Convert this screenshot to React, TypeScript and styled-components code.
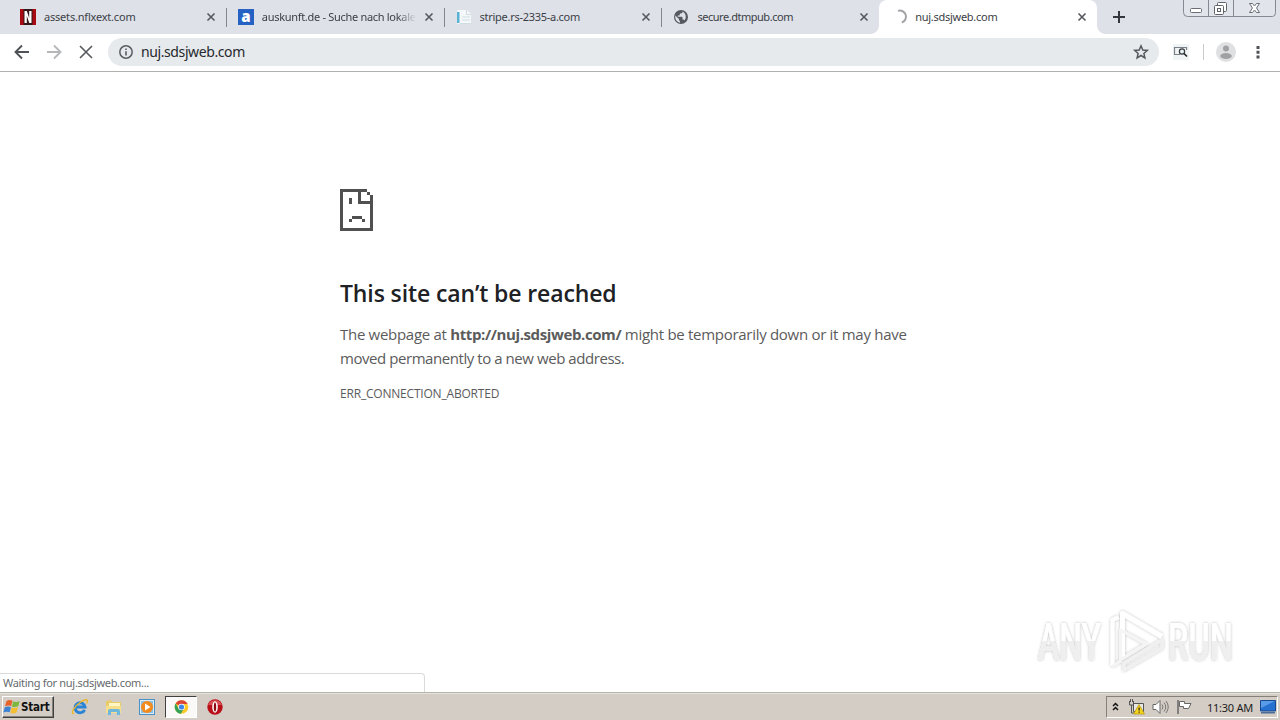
import React from "react";
import styled, { createGlobalStyle } from "styled-components";

interface TabProp {
  title: string;
  icon: React.ReactNode;
  spacing?: number;
  active?: boolean;
  divider?: boolean;
}

const CloseIcon = () => (
  <svg width="8" height="8" viewBox="0 0 8 8">
    <path d="M0.5 0.5L7.5 7.5M7.5 0.5L0.5 7.5" stroke="#55585d" strokeWidth="1.6" />
  </svg>
);

const NetflixIcon = () => (
  <svg width="16" height="16" viewBox="0 0 16 16">
    <path d="M0 0h16v16H0z" fill="#a90b12" />
    <path d="M3.5 0h9v16h-9z" fill="#35181a" />
    <path d="M4.5 2h2.3l2.4 7V2h2.3v12H9.3L6.8 7v7H4.5z" fill="#fff" />
  </svg>
);

const AuskunftIcon = () => (
  <svg width="16" height="16" viewBox="0 0 16 16">
    <path d="M0 0h16v16H0z" fill="#2562c4" />
    <text x="8" y="12.5" textAnchor="middle" fontFamily="Open Sans, sans-serif" fontWeight="800" fontSize="15" fill="#fff">
      a
    </text>
  </svg>
);

const PageIcon = () => (
  <svg width="16" height="16" viewBox="0 0 16 16">
    <path d="M1 1h10l4 4v10H1z" fill="#f4f8fa" />
    <path d="M1 3h2.500v11H1z" fill="#58b3d2" />
    <path d="M10.5 1v4.5H15M6 8h8M6 11h8M4 14.500h11" stroke="#d0dde3" fill="none" />
  </svg>
);

const GlobeIcon = () => (
  <svg width="16" height="16" viewBox="0 0 16 16">
    <circle cx="8" cy="8" r="7" fill="#555960" />
    <path
      d="M2.2 6.6L6 10v1.2l1 1v1.6C4.2 13.3 2.2 10.9 2.2 8zM9.5 2.5v.6c0 .8-.6 1.4-1.4 1.4H6.8v1.3c0 .4-.3.7-.7.7H4.8v1.3h4c.4 0 .7.3.7.7v2h.7c.6 0 1.1.4 1.3.9A5.8 5.8 0 0 0 9.500 2.500z"
      fill="#dee1e8"
    />
  </svg>
);

const SpinnerIcon = () => (
  <svg width="16" height="16" viewBox="0 0 16 16">
    <path d="M7 1.900A6 6 0 1 1 10.800 13.500" fill="none" stroke="#a2a3a6" strokeWidth="2" />
  </svg>
);

const Tab: React.FC<TabProp> = ({ title, icon, spacing, active, divider }) => {
  return (
    <TabBox $active={active} $divider={divider}>
      <TabIcon>{icon}</TabIcon>
      <TabTitle $spacing={spacing} $fade={title.length > 22}>
        {title}
      </TabTitle>
      <CloseIcon />
    </TabBox>
  );
};

const WindowButtons = () => (
  <Buttons>
    <svg width="94" height="18" viewBox="0 0 94 18">
      <path d="M.5 0v12.500q0 4 4 4h85q3 0 3-4V0M25.500 0v16M50.500 0v16" fill="#e1e4ea" stroke="#858994" />
      <rect x="7.500" y="8.500" width="11" height="4" rx="1" fill="#fff" stroke="#6a6d76" />
      <rect x="34.500" y="2.500" width="9" height="9" rx="1" fill="#fff" stroke="#60636c" />
      <rect x="31.500" y="5.500" width="9" height="9" rx="1" fill="#fff" stroke="#60636c" />
      <rect x="34.500" y="8.500" width="3" height="3" fill="#fff" stroke="#60636c" />
      <path d="M66.500 3.500h3l2 2.500 2-2.500h3L73.500 8l3 4.500h-3l-2-2.500-2 2.500h-3l3-4.500z" fill="#fff" stroke="#6a6d76" />
    </svg>
  </Buttons>
);

const Watermark = () => (
  <WatermarkBox>
    <svg width="212" height="76" viewBox="0 0 212 76">
      <defs>
        <filter id="soft" x="-10%" y="-20%" width="120%" height="140%">
          <feDropShadow dx="0" dy="0" stdDeviation="1.8" floodColor="#000" floodOpacity="0.28" />
        </filter>
        <linearGradient id="shade" gradientUnits="userSpaceOnUse" x1="0" y1="16" x2="0" y2="54">
          <stop offset="0.5" stopColor="#fff" />
          <stop offset="0.51" stopColor="#efefef" />
        </linearGradient>
      </defs>
      <g filter="url(#soft)">
        <g fill="url(#shade)" fontFamily="Roboto, sans-serif" fontSize="52" fontWeight="500">
          <text x="8" y="54" textLength="63" lengthAdjust="spacingAndGlyphs">
            ANY
          </text>
          <text x="138" y="54" textLength="65" lengthAdjust="spacingAndGlyphs">
            RUN
          </text>
        </g>
        <g fill="none" stroke="#fff" strokeWidth="4" strokeLinejoin="round">
          <path d="M92.500 52V7.500L132 30.500" strokeWidth="5" />
          <path d="M82.500 60V14l6-3" />
          <path d="M82.500 60l8-5V24L116 38L90 54" stroke="#f5f5f5" strokeWidth="3" />
          <path d="M94 64l38-22v-8L94 57z" stroke="#f0f0f0" strokeWidth="3" />
        </g>
      </g>
    </svg>
  </WatermarkBox>
);

const App: React.FC = () => {
  return (
    <>
      <GlobalStyle />
      <Screen>
        <TabStrip>
          <Tab title="assets.nflxext.com" icon={<NetflixIcon />} spacing={-0.2} divider />
          <Tab title="auskunft.de - Suche nach lokalen" icon={<AuskunftIcon />} spacing={-0.3} divider />
          <Tab title="stripe.rs-2335-a.com" icon={<PageIcon />} spacing={-0.28} divider />
          <Tab title="secure.dtmpub.com" icon={<GlobeIcon />} spacing={-0.47} />
          <Tab title="nuj.sdsjweb.com" icon={<SpinnerIcon />} spacing={-0.27} active />
          <NewTab>
            <svg width="12" height="12" viewBox="0 0 12 12">
              <path d="M6 0v12M0 6h12" stroke="#33363b" strokeWidth="2" />
            </svg>
          </NewTab>
          <WindowButtons />
        </TabStrip>
        <Toolbar>
          <NavIcons>
            <svg width="16" height="16" viewBox="0 0 16 16">
              <path d="M15 8H2M8 1.5L1.5 8L8 14.5" fill="none" stroke="#4f5256" strokeWidth="1.9" />
            </svg>
            <svg width="16" height="16" viewBox="0 0 16 16">
              <path d="M1 8h13M8 1.5L14.5 8L8 14.5" fill="none" stroke="#b6b7b9" strokeWidth="1.9" />
            </svg>
            <svg width="16" height="16" viewBox="0 0 16 16">
              <path d="M2 2l12 12M14 2L2 14" stroke="#55585c" strokeWidth="1.6" />
            </svg>
          </NavIcons>
          <AddressBar>
            <svg width="14" height="14" viewBox="0 0 14 14">
              <circle cx="7" cy="7" r="6.2" fill="none" stroke="#5a5d61" strokeWidth="1.5" />
              <path d="M6.2 3.500h1.600v1.500H6.200zM6.200 6.200h1.600v4.400H6.200z" fill="#5a5d61" />
            </svg>
            <Url>nuj.sdsjweb.com</Url>
            <svg width="16" height="16" viewBox="0 0 16 16">
              <path
                d="M8 1.8l1.8 4.200 4.500.4-3.400 3 1 4.500L8 11.500l-3.900 2.400 1-4.500-3.400-3 4.500-.4z"
                fill="none"
                stroke="#55585c"
                strokeWidth="1.5"
              />
            </svg>
          </AddressBar>
          <Extension>
            <svg width="16" height="16" viewBox="0 0 16 16">
              <path d="M0 0h16v16H0z" fill="#f1f4f5" />
              <path d="M7 10.500H1.500V3.500h12V6" fill="none" stroke="#7b8087" strokeWidth="1.2" />
              <circle cx="9" cy="7.500" r="2.600" fill="#e8f2f4" stroke="#35393e" strokeWidth="1.2" />
              <path d="M11 9.500l3 3" stroke="#222" strokeWidth="1.600" />
            </svg>
          </Extension>
          <Divider />
          <Avatar>
            <svg width="20" height="20" viewBox="0 0 20 20">
              <circle cx="10" cy="10" r="10" fill="#dfe0e1" />
              <circle cx="10" cy="6.500" r="3" fill="#a0a1a3" />
              <ellipse cx="10" cy="14" rx="5.800" ry="3" fill="#a0a1a3" />
            </svg>
          </Avatar>
          <svg width="4" height="14" viewBox="0 0 4 14">
            <path d="M.5 1h3v3h-3zM.5 5.700h3v3h-3zM.5 10.500h3v3h-3z" fill="#4f5256" />
          </svg>
        </Toolbar>

        <Page>
          <Message>
            <svg width="33" height="42" viewBox="0 0 33 42" shapeRendering="crispEdges">
              <path
                d="M0 0h27v3H3v36h27V15H18V3h3v9h9V6h3v36H0zM27 3h3v3h-3zM9 9h3v6H9zM12 27h10v3H12zM9 30h3v3H9zM22 30h3v3h-3z"
                fill="#505050"
              />
            </svg>
            <h1>This site can’t be reached</h1>
            <p>
              <LineOne>
                The webpage at <Site>http://nuj.sdsjweb.com/</Site> might be temporarily down or it may have
              </LineOne>
              <LineTwo>moved permanently to a new web address.</LineTwo>
            </p>
            <ErrorCode>ERR_CONNECTION_ABORTED</ErrorCode>
          </Message>
          <Watermark />
          <Status>Waiting for nuj.sdsjweb.com...</Status>
        </Page>

        <Taskbar>
          <StartButton>
            <svg width="17" height="16" viewBox="0 0 17 16">
              <path d="M3.500 2q3-2 6-.3L8.200 7.100Q5.500 5.800 2 7.300z" fill="#e8622b" />
              <path d="M10.200 2.200Q13 3.800 16.700 2L15.200 7.200Q12 8.700 8.900 7.400z" fill="#7cb83e" />
              <path d="M1.800 8.200Q5 6.700 8 8L6.700 13.300Q4 11.900.3 13.500z" fill="#3d83d2" />
              <path d="M8.700 8.300Q12 9.700 15 8.100L13.600 13.500Q10.500 15.200 7.400 13.700z" fill="#f5bd30" />
            </svg>
            <span>Start</span>
          </StartButton>
          <Launchers>
            <Launcher>
              <svg width="18" height="18" viewBox="0 0 18 18">
                <path d="M13.600 11.800A5 5 0 1 1 14 9H5" fill="none" stroke="#2b83d4" strokeWidth="3" />
                <path d="M3 15.500C-1 16 3 8.500 9 4.500S18 1 15.500 5.500" fill="none" stroke="#e9b62c" strokeWidth="1.400" />
              </svg>
            </Launcher>
            <Launcher>
              <svg width="18" height="18" viewBox="0 0 18 18">
                <path d="M1 3l5-1 1 2h9v11H1z" fill="#e9cc69" />
                <path d="M4 5h11v4H4z" fill="#fff6c4" />
                <path d="M1 8h15v7H1z" fill="#f5df8b" />
                <path d="M3 17v-4q0-2 2-2h8q2 0 2 2v4h-3v-3H6v3z" fill="#6db6dc" />
              </svg>
            </Launcher>
            <Launcher>
              <svg width="18" height="18" viewBox="0 0 18 18">
                <rect x="1.500" y="1.500" width="15" height="15" fill="#d9ecf8" stroke="#4b91c6" />
                <path d="M3 3h12v12H3z" fill="#8dc2e7" />
                <circle cx="9" cy="9" r="6" fill="#f28a1d" />
                <path d="M7 5.500v7L12.500 9z" fill="#fff" />
              </svg>
            </Launcher>
            <Launcher $pressed>
              <svg width="16" height="16" viewBox="0 0 16 16">
                <circle cx="8.500" cy="8" r="6.800" fill="#fbc928" />
                <path d="M2.600 4.600A6.800 6.800 0 0 0 7.800 14.800L11 9.500 5.500 9.500z" fill="#35a153" />
                <path d="M8.500 8L2.600 4.600A6.800 6.800 0 0 1 14.600 5H8.500z" fill="#dc4436" />
                <circle cx="8.500" cy="8" r="3.300" fill="#fff" />
                <circle cx="8.500" cy="8" r="2.600" fill="#4285e8" />
              </svg>
            </Launcher>
            <Launcher $last>
              <svg width="18" height="18" viewBox="0 0 18 18">
                <circle cx="9" cy="9" r="7.700" fill="#b80f19" />
                <path d="M2 7a7.500 7.500 0 0 1 14 0z" fill="#d75055" />
                <ellipse cx="9" cy="9" rx="2.800" ry="5.800" fill="#fff" />
                <ellipse cx="9" cy="9" rx="1.200" ry="4.500" fill="#8f0b13" />
              </svg>
            </Launcher>
          </Launchers>
          <Tray>
            <Chevrons>
              <svg width="8" height="11" viewBox="0 0 8 11">
                <path d="M1 4l2.500-2.500L6 4M1 8l2.500-2.500L6 8" fill="none" stroke="#111" strokeWidth="1.500" />
              </svg>
            </Chevrons>
            <svg width="17" height="16" viewBox="0 0 17 16">
              <path d="M5.500 4.500h10v8h-10z" fill="#e9e7e3" stroke="#555" />
              <path d="M1.500 2v4h4V2M2.500 0v3M4.500 0v3M3.500 6v8h5" fill="none" stroke="#555" />
              <path d="M11 5.500L16.500 15h-11z" fill="#f6d51d" stroke="#b3930c" strokeWidth=".7" />
              <path d="M10.500 8.500h1.200v3h-1.200zM10.500 12.500h1.200v1.200h-1.200z" fill="#222" />
            </svg>
            <svg width="17" height="16" viewBox="0 0 17 16">
              <path d="M1 5.500h3l4-4v13l-4-4H1z" fill="#fff" stroke="#666" />
              <path d="M10 5.500q2 2.500 0 5M12 3.500q3.500 4.500 0 9M14 2q4.500 6 0 12" fill="none" stroke="#777" />
            </svg>
            <svg width="17" height="16" viewBox="0 0 17 16">
              <path d="M2 1v14" stroke="#666" strokeWidth="1.500" />
              <path d="M3.500 2.500h5v2h6.500l-2.500 5H7.500v-2h-4z" fill="#fff" stroke="#666" />
            </svg>
            <Clock>11:30 AM</Clock>
            <svg width="16" height="14" viewBox="0 0 16 14">
              <path d="M.5.5h15v10.500H.5z" fill="#2670cf" stroke="#174b91" />
              <path d="M1 1h14L1 8z" fill="#5a9be8" />
              <path d="M1 12h14v1.500H1z" fill="#4d6d96" />
            </svg>
          </Tray>
        </Taskbar>
      </Screen>
    </>
  );
};

export default App;

const GlobalStyle = createGlobalStyle`
  body {
    margin: 0;
    background-color: #fff;
    overflow: hidden;
  }

  svg {
    display: block;
    flex: none;
    overflow: visible;
  }
`;

const Screen = styled.div`
  width: 1280px;
  height: 720px;
  display: flex;
  flex-direction: column;
  font-family: "Noto Sans", sans-serif;
  overflow: hidden;
`;

const TabStrip = styled.div`
  height: 34px;
  display: flex;
  padding-left: 8px;
  background-color: #dee1e8;
`;

const TabBox = styled.div<{ $active?: boolean; $divider?: boolean }>`
  position: relative;
  width: 217.8px;
  height: 34px;
  box-sizing: border-box;
  padding: 0 11px 0 12px;
  display: flex;
  align-items: center;
  flex: none;
  background-color: ${({ $active }) => ($active ? "#fff" : "transparent")};
  border-radius: 8px 8px 0 0;

  &::before,
  &::after {
    content: "";
    display: ${({ $active }) => ($active ? "block" : "none")};
    position: absolute;
    bottom: 0;
    width: 8px;
    height: 8px;
  }
  &::before {
    left: -8px;
    background: radial-gradient(circle at 0 0, transparent 7.5px, #fff 8px);
  }
  &::after {
    right: -8px;
    background: radial-gradient(circle at 100% 0, transparent 7.5px, #fff 8px);
  }

  ${({ $divider }) =>
    $divider &&
    `
    &::after {
      display: block;
      right: -1px;
      bottom: 7px;
      width: 1px;
      height: 19px;
      background: #82868e;
    }
  `}
`;

const TabIcon = styled.div`
  width: 16px;
  margin-right: 8px;
`;

const TabTitle = styled.div<{ $spacing?: number; $fade?: boolean }>`
  width: 154px;
  margin-right: 9px;
  overflow: hidden;
  white-space: nowrap;
  font-size: 11px;
  line-height: 16px;
  letter-spacing: ${({ $spacing }) => $spacing || 0}px;
  color: #3c4046;
  mask-image: ${({ $fade }) => ($fade ? "linear-gradient(90deg, #000 88%, transparent)" : "none")};
`;

const NewTab = styled.div`
  display: flex;
  align-items: center;
  margin-left: 16px;
`;

const Buttons = styled.div`
  margin-left: auto;
  margin-right: 3px;
`;

const Toolbar = styled.div`
  height: 37px;
  box-sizing: content-box;
  display: flex;
  align-items: center;
  border-bottom: 1px solid #b1b2b0;
  background-color: #fff;

  > * {
    margin-bottom: 1px;
  }
`;

const NavIcons = styled.div`
  display: flex;
  gap: 16px;
  padding: 0 14px;
`;

const AddressBar = styled.div`
  width: 1051px;
  height: 28px;
  box-sizing: border-box;
  padding: 0 10px 0 11px;
  display: flex;
  align-items: center;
  border-radius: 14px;
  background-color: #e7eaed;
`;

const Url = styled.div`
  flex: 1;
  margin-left: 8px;
  font-size: 14px;
  line-height: 20px;
  letter-spacing: -0.4px;
  color: #25282c;
`;

const Extension = styled.div`
  margin-left: 14px;
`;

const Divider = styled.div`
  width: 1px;
  height: 16px;
  margin-left: 14px;
  margin-right: 12px;
  background-color: #c9cbce;
`;

const Avatar = styled.div`
  margin-right: 30px;
  width: 10px;
`;

const Page = styled.div`
  position: relative;
  height: 620px;
  background-color: #fff;
`;

const Message = styled.div`
  width: 600px;
  margin: 0 auto;
  padding-top: 117px;
  color: #5b5b5b;

  h1 {
    margin: 47px 0 0;
    font-family: "Open Sans", sans-serif;
    font-size: 23px;
    font-weight: 600;
    line-height: 30px;
    letter-spacing: -0.12px;
    color: #202124;
    white-space: nowrap;
  }
  p {
    margin: 14px 0 0;
    font-family: "Open Sans", sans-serif;
    font-size: 15px;
    line-height: 24px;
  }
`;

const LineOne = styled.span`
  display: block;
  white-space: nowrap;
  letter-spacing: -0.29px;
`;

const LineTwo = styled.span`
  display: block;
  white-space: nowrap;
  letter-spacing: -0.44px;
`;

const Site = styled.strong`
  font-weight: 700;
  letter-spacing: -0.39px;
`;

const ErrorCode = styled.div`
  margin-top: 16px;
  font-family: "Open Sans", sans-serif;
  font-size: 12px;
  line-height: 16px;
  letter-spacing: -0.2px;
`;

const WatermarkBox = styled.div`
  position: absolute;
  left: 1030px;
  top: 534px;
`;

const Status = styled.div`
  position: absolute;
  left: 0;
  bottom: 0;
  width: 425px;
  height: 19px;
  box-sizing: border-box;
  padding-left: 3px;
  border: 1px solid #d9dadc;
  border-width: 1px 1px 0 0;
  border-radius: 0 4px 0 0;
  background-color: #fff;
  font-size: 11px;
  line-height: 18px;
  letter-spacing: -0.31px;
  color: #666a6e;
`;

const Taskbar = styled.div`
  height: 28px;
  box-sizing: border-box;
  display: flex;
  align-items: center;
  padding: 2px 2px 1px 2px;
  border-top: 1px solid #b5b3ab;
  box-shadow: inset 0 1px #e6e2dc;
  background-color: #d4cdc5;
`;

const StartButton = styled.div`
  width: 52px;
  height: 22px;
  box-sizing: border-box;
  display: flex;
  align-items: center;
  gap: 1px;
  border: 1px solid;
  border-color: #fff #404040 #404040 #fff;
  box-shadow: inset -1px -1px #858078;
  font-family: "DejaVu Sans Condensed", "DejaVu Sans", sans-serif;
  font-size: 11.5px;
  font-weight: 700;
  letter-spacing: -0.2px;
  color: #111;
`;

const Launchers = styled.div`
  display: flex;
  gap: 1px;
  margin-left: 10px;
`;

const Launcher = styled.div<{ $pressed?: boolean; $last?: boolean }>`
  width: ${({ $pressed }) => ($pressed ? 32 : 32.5)}px;
  height: 22px;
  box-sizing: border-box;
  margin-left: ${({ $last }) => ($last ? 1 : 0)}px;
  display: flex;
  align-items: center;
  justify-content: center;
  border: 1px solid;
  border-color: ${({ $pressed }) => ($pressed ? "#404040 #fff #fff #404040" : "transparent")};
  background-color: ${({ $pressed }) => ($pressed ? "#faf9f8" : "transparent")};
`;

const Tray = styled.div`
  height: 22px;
  width: 172px;
  box-sizing: border-box;
  margin-left: auto;
  display: flex;
  align-items: center;
  padding: 0 1px 0 5px;
  gap: 7px;
  border: 1px solid;
  border-color: #858078 #fff #fff #858078;
`;

const Chevrons = styled.div`
  margin-right: 1px;
`;

const Clock = styled.div`
  margin-left: auto;
  white-space: nowrap;
  font-size: 11px;
  letter-spacing: -0.25px;
  color: #222;
`;
